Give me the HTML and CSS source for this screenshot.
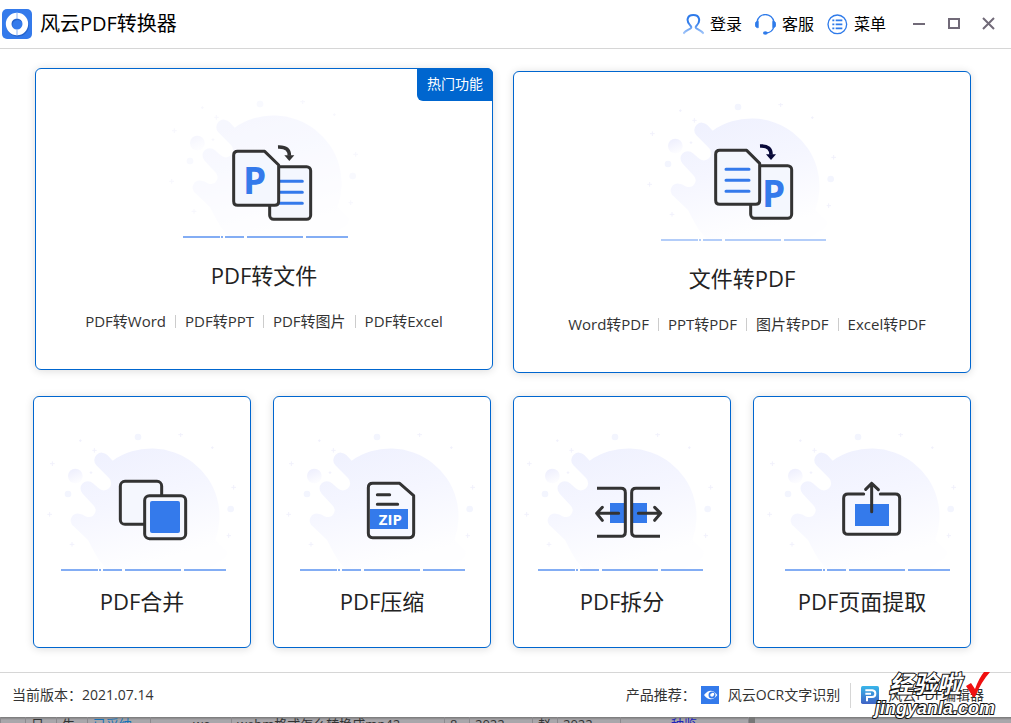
FILE: index.html
```html
<!DOCTYPE html>
<html lang="zh-CN">
<head>
<meta charset="utf-8">
<meta name="viewport" content="width=device-width, initial-scale=1">
<title>风云PDF转换器</title>
<link rel="stylesheet" href="styles.css">
</head>
<body>
<svg class="defs" aria-hidden="true">
  <defs>
    <linearGradient id="blob-fill" x1="0" y1="0" x2="0.35" y2="1">
      <stop offset="0" stop-color="#eef0fe"/>
      <stop offset="0.5" stop-color="#f5f6ff"/>
      <stop offset="1" stop-color="#fefeff"/>
    </linearGradient>
    <linearGradient id="ball-fill" x1="0" y1="0" x2="0.4" y2="1">
      <stop offset="0" stop-color="#ecedfd"/>
      <stop offset="1" stop-color="#fcfcff"/>
    </linearGradient>
    <linearGradient id="user-fill" x1="0" y1="0" x2="0" y2="1">
      <stop offset="0.4" stop-color="#2f7bea"/>
      <stop offset="1" stop-color="#a5c8fa"/>
    </linearGradient>
    <linearGradient id="editor-fill" x1="0" y1="0" x2="0" y2="1">
      <stop offset="0" stop-color="#38b6ea"/>
      <stop offset="1" stop-color="#3f62c4"/>
    </linearGradient>
    <g id="splash">
      <path fill="url(#blob-fill)" d="M232 433C205 408 195 385 174 345L131 304A21 21 0 0 1 150 267C160 268 165 276 176 276A20 20 0 0 0 190 241L158 206A21 21 0 0 1 189 175L206 190A21 21 0 0 0 237 159L199 121A22 22 0 0 1 232 90L248 107A204 204 0 0 1 556 345L590 378Q594 395 575 405L530 433Z"/>
      <circle cx="136" cy="153" r="22" fill="url(#ball-fill)"/>
      <g fill="#f3f5fe">
        <circle cx="114" cy="207" r="10"/><circle cx="324" cy="36" r="10"/><circle cx="602" cy="252" r="10"/>
      </g>
      <path fill="none" stroke="#f1f1fc" stroke-width="3" d="M147 47h8m-4-4v8M187 76h13m-7-7v14M445 29h14m-7-7v14M543 68h8m-4-4v8M604 187h14m-7-7v14M590 332h13m-7-7v14M60 116h14m-7-7v14M52 268h14m-7-7v14M119 358h14m-7-7v14M179 143h8m-4-4v8"/>
    </g>
    <path id="ground" fill="none" stroke-width="6" d="M93 435h111m3 0h6m6 0h57m9 0h168m9 0h126"/>
  </defs>
</svg>

<div class="app">
  <header class="titlebar">
    <svg class="logo" viewBox="6 27 90 90" aria-hidden="true">
      <rect x="6" y="27" width="90" height="90" rx="15" fill="#347aeb"/>
      <circle cx="53" cy="76" r="25" fill="none" stroke="#2563cc" stroke-width="18"/>
      <circle cx="51" cy="72" r="25" fill="none" stroke="#fff" stroke-width="17"/>
      <path d="M51 38v18M51 88v18" stroke="#8fb5f4" stroke-width="3"/>
    </svg>
    <h1 class="app-name">风云PDF转换器</h1>
    <nav class="menu">
      <button class="menu-item" type="button">
        <svg viewBox="39 41 63 63" fill="none" stroke="url(#user-fill)" stroke-width="6" aria-hidden="true">
          <path d="M40 100C44 93 50 91 61 85C65 83 65 79 61 76C48 63 50 44 70 44C90 44 92 63 80 76C76 79 76 83 80 85C91 91 96 93 101 100"/>
        </svg>登录
      </button>
      <button class="menu-item" type="button">
        <svg viewBox="254 41 63 63" fill="none" aria-hidden="true">
          <path d="M260 66C263 35 307 35 311 66M310 81C307 91 300 97 287 98" stroke="#2f7bea" stroke-width="4"/>
          <path d="M264 63V82C252 85 250 61 264 63ZM307 63V82C319 85 321 61 307 63Z" fill="#2f7bea" stroke="#2f7bea" stroke-width="2"/>
          <ellipse cx="285" cy="98" rx="7" ry="5" fill="#2f7bea"/>
        </svg>客服
      </button>
      <button class="menu-item" type="button">
        <svg viewBox="470 41 63 63" fill="none" stroke="#2f7bea" aria-hidden="true">
          <circle cx="501" cy="72" r="28" stroke-width="4"/>
          <path stroke-width="5" d="M486 60h6m4 0h20M486 72h6m4 0h20M486 84h6m4 0h20"/>
        </svg>菜单
      </button>
    </nav>
    <div class="window-controls">
      <button class="window-button" type="button" aria-label="最小化"><svg viewBox="0 0 12 12"><path d="M0 6h12"/></svg></button>
      <button class="window-button" type="button" aria-label="最大化"><svg viewBox="0 0 12 12"><path d="M1 1h10v9H1z"/></svg></button>
      <button class="window-button" type="button" aria-label="关闭"><svg viewBox="0 0 12 12"><path d="M0 0l11 11M11 0L0 11"/></svg></button>
    </div>
  </header>

  <main class="content">
    <div class="row row-large">
      <article class="card card-large">
        <span class="badge">热门功能</span>
        <svg class="art" viewBox="3 30 618 420" aria-hidden="true">
          <use href="#splash" x="-24" y="6" opacity="0.55"/>
          <use href="#ground" x="-24" y="6" stroke="#83adf4"/>
          <g stroke="#333" stroke-width="9" fill="#f4f7fe">
            <rect x="329" y="230" width="123" height="158" rx="12"/>
            <path d="M360 274h67M360 307h67M360 340h67" stroke="#347aeb" stroke-linecap="round"/>
            <path stroke-linejoin="round" d="M233 184H314L356 225V334Q356 346 344 346H233Q221 346 221 334V196Q221 184 233 184Z"/>
          </g>
          <text class="letter" x="249" y="311">P</text>
          <path d="M354 171C380 170 388 180 388 197" fill="none" stroke="#333" stroke-width="11"/>
          <path d="M373 196H403L388 213Z" fill="#333"/>
        </svg>
        <h2 class="card-title">PDF转文件</h2>
        <ul class="links">
          <li><a href="#">PDF转Word</a></li><li><a href="#">PDF转PPT</a></li><li><a href="#">PDF转图片</a></li><li><a href="#">PDF转Excel</a></li>
        </ul>
      </article>

      <article class="card card-large card-lowered">
        <svg class="art" viewBox="-3 39 618 420" aria-hidden="true">
          <use href="#splash" x="-30" y="15"/>
          <use href="#ground" x="-30" y="15" stroke="#b3cdf9"/>
          <g stroke="#333" stroke-width="9" fill="#f4f7fe">
            <rect x="332" y="227" width="123" height="158" rx="12"/>
            <path stroke-linejoin="round" d="M239 181H320L359 220V331Q359 343 347 343H239Q227 343 227 331V193Q227 181 239 181Z"/>
            <path d="M258 238h69M258 271h69M258 304h69" stroke="#347aeb" stroke-linecap="round"/>
          </g>
          <text class="letter" x="366" y="350">P</text>
          <path d="M360 168C385 167 393 177 393 194" fill="none" stroke="#080838" stroke-width="11"/>
          <path d="M378 193H408L393 210Z" fill="#080838"/>
        </svg>
        <h2 class="card-title">文件转PDF</h2>
        <ul class="links links-indented">
          <li><a href="#">Word转PDF</a></li><li><a href="#">PPT转PDF</a></li><li><a href="#">图片转PDF</a></li><li><a href="#">Excel转PDF</a></li>
        </ul>
      </article>
    </div>

    <div class="row row-small">
      <a class="card card-small" href="#">
        <svg class="art" viewBox="27 24 618 420" aria-hidden="true">
          <use href="#splash"/>
          <use href="#ground" stroke="#83adf4"/>
          <g stroke="#333" stroke-width="9" fill="#f5f7fe">
            <rect x="271" y="169" width="124" height="129" rx="14"/>
            <rect x="344" y="212" width="123" height="129" rx="14"/>
          </g>
          <rect x="360" y="228" width="90" height="96" rx="6" fill="#347aeb"/>
        </svg>
        <h2 class="card-title">PDF合并</h2>
      </a>
      <a class="card card-small" href="#">
        <svg class="art" viewBox="27 24 618 420" aria-hidden="true">
          <use href="#splash" x="-3"/>
          <use href="#ground" x="-3" stroke="#83adf4"/>
          <path stroke="#333" stroke-width="9" fill="#f6f8ff" stroke-linejoin="round" d="M308 175H389L431 212V325Q431 338 418 338H308Q295 338 295 325V188Q295 175 308 175Z"/>
          <path d="M322 209h37M322 238h61" stroke="#333" stroke-width="9" stroke-linecap="round"/>
          <path d="M300 252H414V312H300Z" fill="#347aeb"/>
          <text class="zip" x="361" y="300">ZIP</text>
        </svg>
        <h2 class="card-title">PDF压缩</h2>
      </a>
      <a class="card card-small" href="#">
        <svg class="art" viewBox="27 24 618 420" aria-hidden="true">
          <use href="#splash" x="-9"/>
          <use href="#ground" x="-9" stroke="#83adf4"/>
          <path d="M300 234h43v60h-43zM368 234h43v60h-43z" fill="#347aeb"/>
          <g fill="none" stroke="#333" stroke-width="9">
            <path d="M261 190H333Q346 190 346 203V321Q346 334 333 334H261M450 190H378Q365 190 365 203V321Q365 334 378 334H450"/>
            <path stroke-linecap="round" stroke-linejoin="round" d="M326 265H260M277 247L260 265L277 286M385 265H452M434 247L452 265L434 286"/>
          </g>
        </svg>
        <h2 class="card-title">PDF拆分</h2>
      </a>
      <a class="card card-small" href="#">
        <svg class="art" viewBox="27 24 618 420" aria-hidden="true">
          <use href="#splash"/>
          <use href="#ground" x="12" stroke="#83adf4"/>
          <path d="M315 237h102v66H315z" fill="#347aeb"/>
          <g fill="none" stroke="#333" stroke-width="9" stroke-linecap="round" stroke-linejoin="round">
            <path d="M341 207H294Q281 207 281 220V315Q281 328 294 328H436Q449 328 449 315V220Q449 207 436 207H391"/>
            <path d="M365 260V175M347 193L365 175L385 194"/>
          </g>
        </svg>
        <h2 class="card-title">PDF页面提取</h2>
      </a>
    </div>
  </main>

  <footer class="statusbar">
    <span>当前版本：2021.07.14</span>
    <div class="products">
      <span class="products-label">产品推荐：</span>
      <a class="product" href="#">
        <svg viewBox="0 0 54 54" aria-hidden="true">
          <path d="M0 0h54v54H0z" fill="#347aeb"/>
          <path d="M9 27Q29 1 49 27Q29 53 9 27Z" fill="#fff"/>
          <circle cx="34" cy="27" r="10" fill="#fff"/>
          <circle cx="33" cy="27" r="8" fill="none" stroke="#347aeb" stroke-width="5"/>
          <circle cx="36" cy="24" r="4" fill="#fff"/>
        </svg>风云OCR文字识别
      </a>
      <a class="product" href="#">
        <svg viewBox="0 0 54 54" aria-hidden="true">
          <rect width="54" height="54" rx="5" fill="url(#editor-fill)"/>
          <path d="M13 13H34Q43 14 43 23Q43 33 33 33H18V46M13 23H30" fill="none" stroke="#fff" stroke-width="6"/>
        </svg>风云PDF编辑器
      </a>
    </div>
    <div class="watermark">
      <span class="watermark-name">经验啦<svg viewBox="0 0 24 26" aria-hidden="true"><path d="M0 14L5 11L9 17Q13 6 18 0H24Q15 10 9 25H7Z" fill="#f01010"/></svg></span>
      <span class="watermark-site">jingyanla.com</span>
    </div>
  </footer>

  <div class="backdrop" aria-hidden="true">
    <span class="cell-box"></span><span class="cell-s">日</span><span class="cell-s">牛</span><span class="cell-m cell-blue">已采纳</span><span class="cell-l">wo</span><span class="cell-xl">webm格式怎么转换成mp42一</span><span class="cell-xs">8</span><span class="cell-m">2022</span><span class="cell-xs">赵</span><span class="cell-m">2022</span><span class="cell-last">种鉴</span><span class="cell-scroll"></span>
  </div>
</div>
</body>
</html>
```
FILE: styles.css
```css
* {
  box-sizing: border-box;
}

body {
  margin: 0;
  background: #fff;
  color: #222;
  font-family: "Open Sans", "Noto Sans CJK SC", sans-serif;
}

button {
  padding: 0;
  border: 0;
  background: none;
  color: inherit;
  font: inherit;
}

a {
  color: inherit;
  text-decoration: none;
}

.defs {
  position: absolute;
  width: 0;
  height: 0;
}

.app {
  display: flex;
  flex-direction: column;
  min-height: 100vh;
}

/* Title bar */

.titlebar {
  display: flex;
  align-items: center;
  height: 49px;
  padding: 0 16px 0 2px;
  border-bottom: 1px solid #d6d6d6;
  color: #000;
}

.logo {
  width: 30px;
  height: 30px;
  margin-right: 8px;
}

.app-name {
  margin: 0 auto 0 0;
  font-size: 20px;
  font-weight: 400;
  line-height: 28px;
}

.menu {
  display: flex;
  gap: 13px;
  margin-right: 27px;
}

.menu-item {
  display: flex;
  align-items: center;
  gap: 6px;
  font-size: 16px;
  line-height: 24px;
}

.menu-item svg {
  width: 21px;
  height: 21px;
}

.window-controls {
  display: flex;
  gap: 23px;
}

.window-button {
  display: flex;
}

.window-button svg {
  width: 12px;
  height: 12px;
  overflow: visible;
  fill: none;
  stroke: #716a78;
  stroke-width: 2;
}

/* Cards */

.content {
  display: flex;
  flex: 1;
  flex-direction: column;
  gap: 23px;
  padding: 19px 40px 24px 33px;
}

.row {
  display: flex;
  align-items: flex-start;
}

.row-large {
  gap: 20px;
  padding-left: 2px;
}

.row-small {
  gap: 22px;
}

.card {
  position: relative;
  display: flex;
  flex: 1;
  flex-direction: column;
  align-items: center;
  border: 1px solid #0066cf;
  border-radius: 6px;
  background: #fff;
  box-shadow: 0 1px 8px rgba(0, 0, 0, 0.14);
}

.card-large {
  padding: 31px 0 36px;
}

.card-lowered {
  margin-top: 3px;
}

.card-small {
  padding: 36px 0 30px;
}

.art {
  width: 206px;
  height: 140px;
}

.letter,
.zip {
  font-weight: 700;
  font-family: "Open Sans", sans-serif;
}

.letter {
  fill: #347aeb;
  font-size: 111px;
}

.zip {
  fill: #fff;
  font-size: 45px;
  text-anchor: middle;
}

.card-title {
  margin: 19px 0 0;
  font-size: 22px;
  font-weight: 400;
  line-height: 32px;
}

.card-small .card-title {
  margin-top: 12px;
}

.links {
  display: flex;
  margin: 18px 0 0;
  padding: 0;
  color: #333;
  font-size: 15px;
  line-height: 24px;
  list-style: none;
}

.links-indented {
  padding-left: 10px;
}

.links li {
  display: flex;
  align-items: center;
}

.links li + li::before {
  width: 1px;
  height: 13px;
  margin: 0 9px;
  background: #ccc;
  content: "";
}

.badge {
  position: absolute;
  top: -1px;
  right: -1px;
  padding: 4px 10px 5px;
  border-radius: 0 6px 0 6px;
  background: #0066cf;
  color: #fff;
  font-size: 14px;
  line-height: 24px;
}

/* Status bar */

.statusbar {
  position: relative;
  display: flex;
  align-items: center;
  justify-content: space-between;
  height: 45px;
  padding: 0 27px 0 12px;
  border-top: 1px solid #d6d6d6;
  color: #333;
  font-size: 14px;
  line-height: 20px;
}

.products,
.product {
  display: flex;
  align-items: center;
}

.products-label {
  margin-right: 5px;
}

.product {
  gap: 9px;
}

.product svg {
  width: 18px;
  height: 18px;
}

.product + .product::before {
  width: 1px;
  height: 25px;
  margin: 0 1px 0 10px;
  background: #d6d6d6;
  content: "";
}

.watermark {
  position: absolute;
  right: 16px;
  bottom: -1px;
  display: flex;
  flex-direction: column;
  align-items: flex-end;
  color: #fff;
  font-weight: 700;
  -webkit-text-stroke: 2px #111;
  paint-order: stroke fill;
}

.watermark-name {
  display: flex;
  gap: 5px;
  padding-right: 5px;
  font-size: 24px;
  font-style: italic;
  line-height: 24px;
}

.watermark-name svg {
  width: 24px;
  height: 26px;
}

.watermark-site {
  font-family: "Liberation Sans", sans-serif;
  font-size: 18px;
  font-style: italic;
  line-height: 20px;
}

/* Sliver of the window behind */

.backdrop {
  display: flex;
  height: 6px;
  overflow: hidden;
  background: linear-gradient(#777, #a9a7ab 3px);
  color: #333;
  font-size: 13px;
  line-height: 14px;
  white-space: nowrap;
}

.backdrop span {
  flex: none;
  padding-left: 5px;
  border-left: 1px solid #8c8a8e;
}

.backdrop .cell-box {
  width: 25px;
}

.cell-s {
  width: 31px;
}

.cell-m {
  width: 63px;
}

.backdrop .cell-blue {
  color: #1671b8;
}

.backdrop .cell-l {
  width: 81px;
  padding-left: 42px;
}

.cell-xl {
  width: 213px;
}

.cell-xs {
  width: 25px;
}

.backdrop .cell-last {
  width: 128px;
  padding-left: 50px;
  color: #22b;
}

.backdrop .cell-scroll {
  width: 7px;
  background: #777;
}
```
